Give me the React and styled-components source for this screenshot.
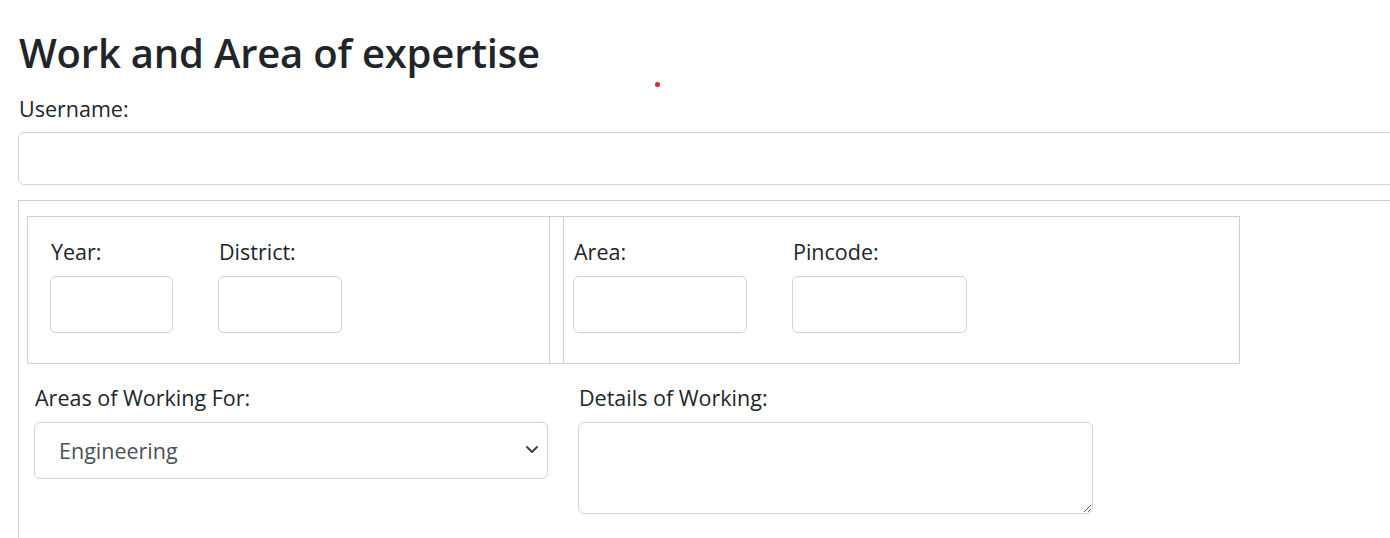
import styled, { createGlobalStyle } from "styled-components";

const GlobalStyle = createGlobalStyle`
    html, body {
        margin: 0;
        padding: 0;
        background: #fff;
        overflow: hidden;
    }
    body {
        font-family: "Open Sans", "Noto Sans", sans-serif;
        color: #212529;
    }
    * { box-sizing: border-box; }
`;

const Page = styled.div`
    position: relative;
    width: 1390px;
    height: 538px;
    overflow: hidden;
    padding: 29px 0 0 18px;
`;

const Title = styled.h1`
    margin: 0 0 16px 1px;
    font-size: 40px;
    font-weight: 600;
    line-height: 1.2;
    letter-spacing: -0.2px;
`;

const Dot = styled.span`
    position: absolute;
    left: 655px;
    top: 82px;
    width: 5px;
    height: 5px;
    border-radius: 50%;
    background: #e3262b;
`;

const Label = styled.label`
    display: block;
    margin: 0 0 7px 1px;
    font-size: 21.5px;
    line-height: 1.5;
    font-weight: 400;
`;

const TextInput = styled.input`
    display: block;
    width: ${(p) => p.$w}px;
    height: ${(p) => p.$h || 57}px;
    border: 1px solid #ced4da;
    border-radius: 6px;
    background: #fff;
    font: inherit;
    outline: none;
`;

const Fieldset = styled.div`
    margin-top: 15px;
    width: 1400px;
    min-height: 400px;
    border: 1px solid #cfcfcf;
    padding: 15px 0 0 8px;
`;

const Table = styled.div`
    display: flex;
    gap: 13px;
    width: 1213px;
    height: 148px;
    border: 1px solid #cfcfcf;
`;

const Cell = styled.div`
    display: flex;
    gap: 45px;
    align-items: flex-start;
    padding: 19px 0 0 ${(p) => p.$pad}px;
    ${(p) => (p.$first ? "width: 522px; border-right: 1px solid #cfcfcf;" : "flex: 1; border-left: 1px solid #cfcfcf;")}
`;

const Field = styled.div`
    display: flex;
    flex-direction: column;
`;

const BottomRow = styled.div`
    display: flex;
    gap: 30px;
    margin: 18px 0 0 7px;
`;

const SelectWrap = styled.div`
    position: relative;
    width: 514px;
    height: 57px;
`;

const Select = styled.select`
    appearance: none;
    -webkit-appearance: none;
    width: 100%;
    height: 100%;
    padding: 0 40px 0 24px;
    border: 1px solid #ced4da;
    border-radius: 6px;
    background: #fff;
    color: #495057;
    font-family: inherit;
    font-size: 21.5px;
    outline: none;
`;

const Chevron = styled.svg`
    position: absolute;
    right: 9px;
    top: 22px;
    width: 14px;
    height: 11px;
    pointer-events: none;
`;

const TextArea = styled.textarea`
    display: block;
    width: 515px;
    height: 92px;
    border: 1px solid #ced4da;
    border-radius: 6px;
    font: inherit;
    outline: none;
    resize: both;
`;

const App = () => {
    return (
        <>
            <GlobalStyle />
            <Page>
                <Title>Work and Area of expertise</Title>
                <Dot />
                <Label>Username:</Label>
                <TextInput $w={1400} $h={53} />
                <Fieldset>
                    <Table>
                        <Cell $first $pad={22}>
                            <Field>
                                <Label>Year:</Label>
                                <TextInput $w={123} />
                            </Field>
                            <Field>
                                <Label>District:</Label>
                                <TextInput $w={124} />
                            </Field>
                        </Cell>
                        <Cell $pad={9}>
                            <Field>
                                <Label>Area:</Label>
                                <TextInput $w={174} />
                            </Field>
                            <Field>
                                <Label>Pincode:</Label>
                                <TextInput $w={175} />
                            </Field>
                        </Cell>
                    </Table>
                    <BottomRow>
                        <Field>
                            <Label>Areas of Working For:</Label>
                            <SelectWrap>
                                <Select defaultValue="Engineering">
                                    <option>Engineering</option>
                                    <option>Medical</option>
                                    <option>Business</option>
                                </Select>
                                <Chevron viewBox="0 0 14 11">
                                    <path d="M2 3l5 5 5-5" fill="none" stroke="#343a40" strokeWidth="1.8" strokeLinecap="round" strokeLinejoin="round" />
                                </Chevron>
                            </SelectWrap>
                        </Field>
                        <Field>
                            <Label>Details of Working:</Label>
                            <TextArea />
                        </Field>
                    </BottomRow>
                </Fieldset>
            </Page>
        </>
    );
};

export default App;
